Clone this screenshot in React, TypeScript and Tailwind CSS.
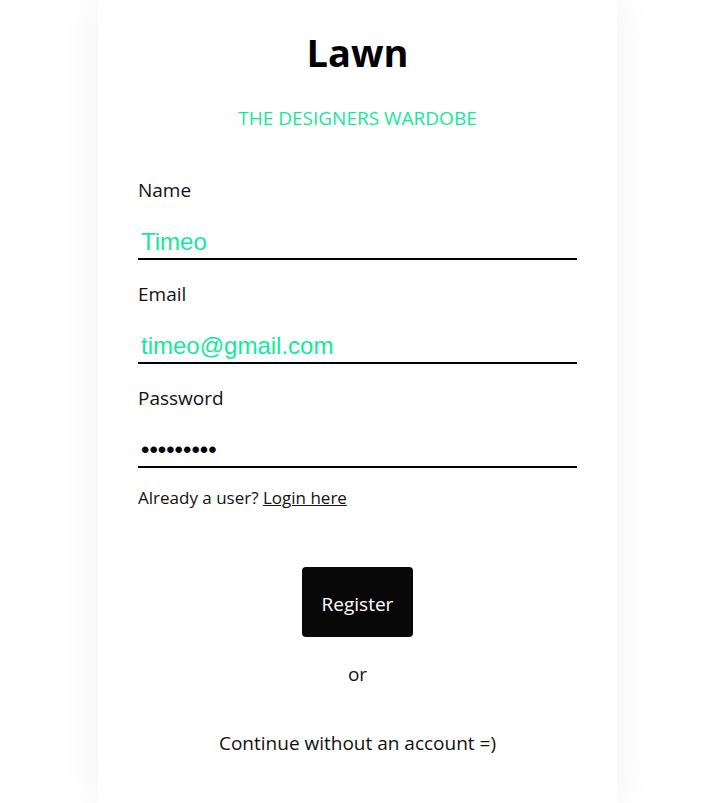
import { useState } from 'react';

export default function App() {
  const [name, setName] = useState('Timeo');
  const [email, setEmail] = useState('timeo@gmail.com');
  const [password, setPassword] = useState('secret123');

  const fields = [
    { label: 'Name', type: 'text', value: name, onChange: setName },
    { label: 'Email', type: 'email', value: email, onChange: setEmail },
    { label: 'Password', type: 'password', value: password, onChange: setPassword },
  ];

  return (
    <div className="min-h-screen bg-white font-['Open_Sans',sans-serif] text-[#111]">
      <div className="ml-[98px] w-[519px] min-h-screen bg-white shadow-[0_0_40px_rgba(0,0,0,0.06)] px-10 flex flex-col">
        {/* Header */}
        <h1 className="mt-[22px] text-center text-[38px] font-bold leading-[60px] text-black">Lawn</h1>
        <p className="mt-[21px] text-center text-[19px] leading-[30px] text-[#14e89b]">THE DESIGNERS WARDOBE</p>

        {/* Form */}
        <form className="mt-[42px] flex flex-col gap-[19px]" onSubmit={(e) => e.preventDefault()}>
          {fields.map((field) => (
            <div key={field.label} className="flex flex-col">
              <label className="text-[19px] leading-[30px]">{field.label}</label>
              <input
                type={field.type}
                value={field.value}
                onChange={(e) => field.onChange(e.target.value)}
                autoFocus={field.type === 'password'}
                className={`mt-[20px] h-[35px] w-full border-b-2 border-black px-[3px] font-['Liberation_Sans',Arial,sans-serif] text-[24px] outline-none ${
                  field.type === 'password' ? 'text-black' : 'text-[#14e89b]'
                }`}
              />
            </div>
          ))}
        </form>

        <p className="mt-[17px] text-[17px] leading-[26px]">
          Already a user? <a href="#" className="underline">Login here</a>
        </p>

        {/* Actions */}
        <div className="mt-[56px] flex flex-col items-center">
          <button className="h-[70px] w-[111px] rounded-[4px] bg-[#080808] pt-[4px] text-[19px] text-white">Register</button>
          <span className="mt-[22px] text-[19px] leading-[30px]">or</span>
          <button className="mt-[39px] text-[19px] leading-[30px]">Continue without an account =)</button>
        </div>
      </div>
    </div>
  );
}
